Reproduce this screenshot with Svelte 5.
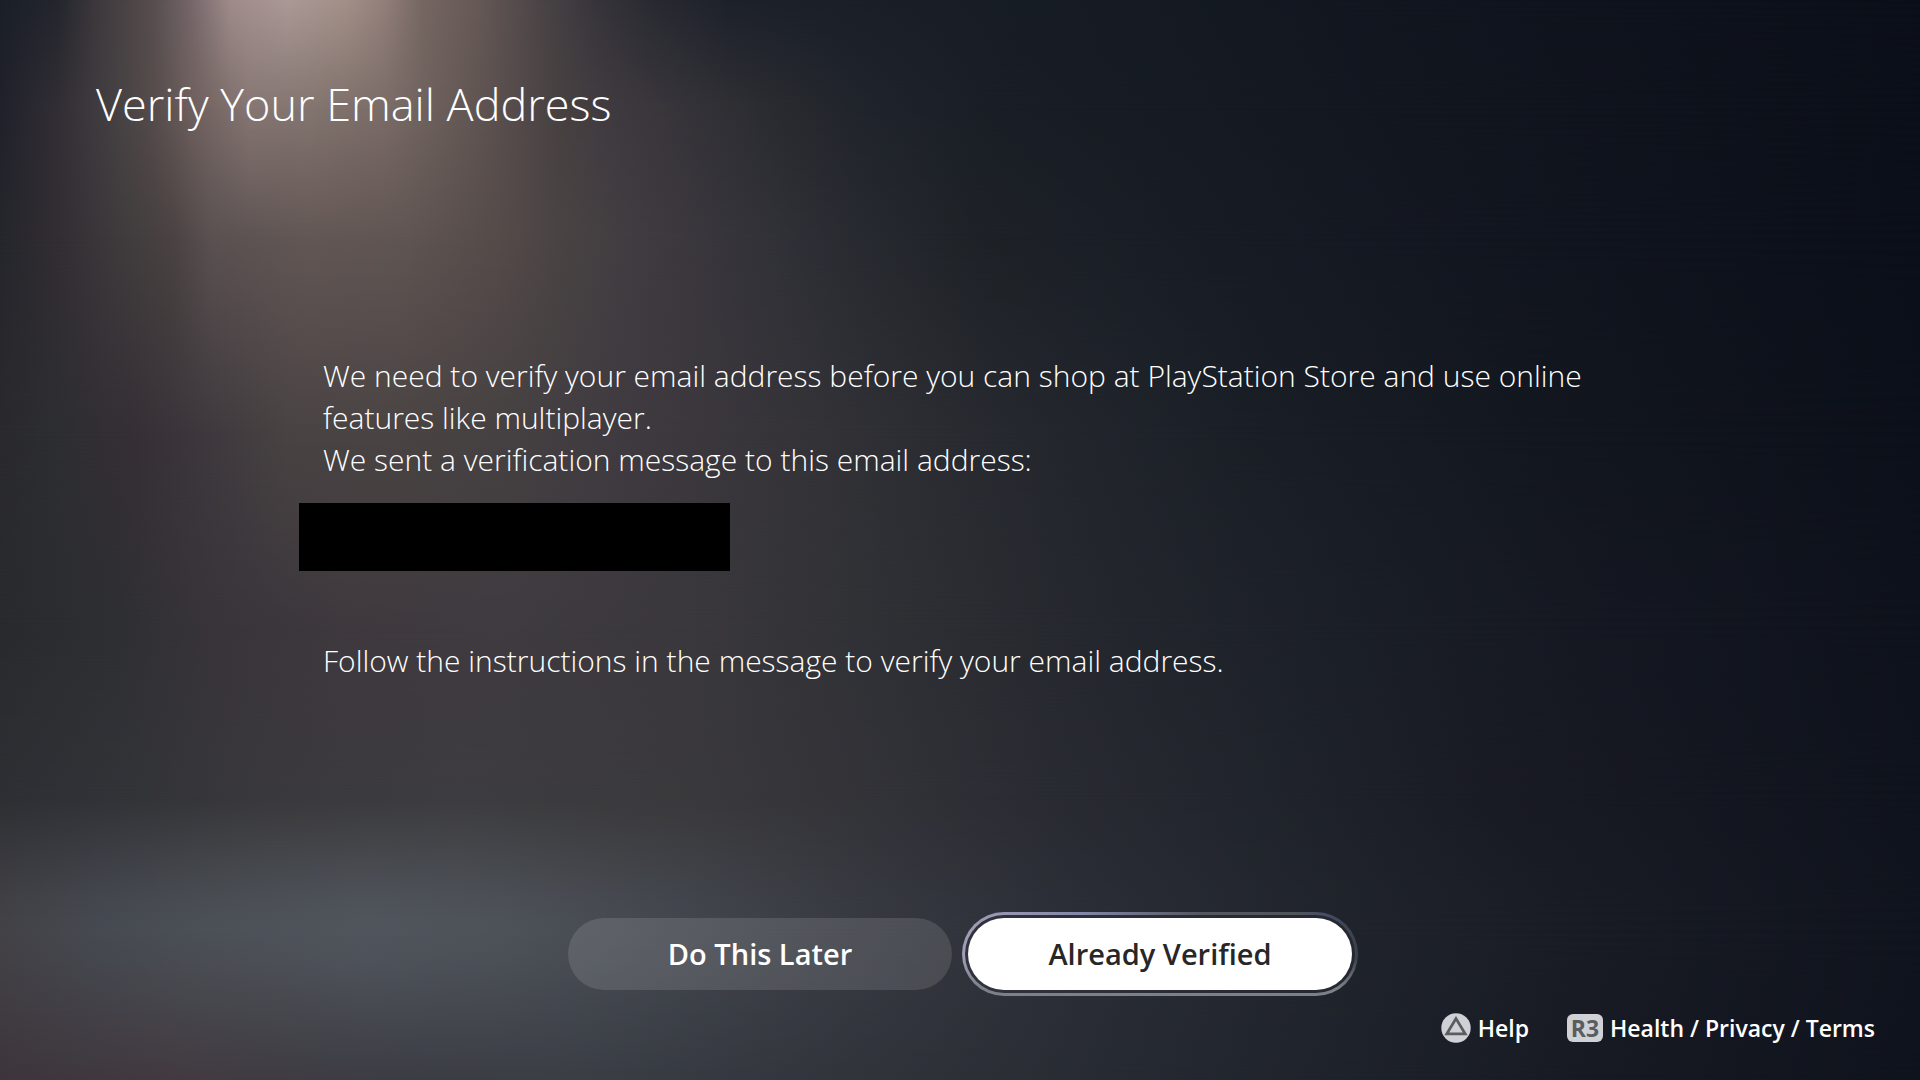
<script>
  // Horizontal colour runs of the backdrop, top to bottom; each band fades into the next.
  const bands = [
    'linear-gradient(90deg, #1a1f28 0%, #23262d 3%, #3d383c 5%, #574e4e 8%, #76676a 10%, #9f8c8a 12%, #ab9996 15%, #a39089 18%, #937f7b 20%, #756761 22%, #655856 25%, #4c4547 28%, #37353b 31%, #292a31 34%, #1d212a 38%, #1a1f28 44%, #171c24 55%, #11151f 75%, #0b0f19 100%)',
    'linear-gradient(90deg, #20212a 0%, #322e35 3%, #454143 6%, #564c4b 8%, #6e605e 10%, #867673 13%, #83756f 16%, #7b6c67 20%, #6a5e5a 23%, #5a4f4e 26%, #484141 29%, #3f3a40 32%, #323137 37%, #282a2f 41%, #20242b 45%, #191e25 52%, #12161f 75%, #0b0f19 100%)',
    'linear-gradient(90deg, #25262c 0%, #322d33 3%, #3e3a3c 6%, #4a4342 9%, #5a5151 11%, #635755 16%, #605553 21%, #554b49 26%, #4a4444 29%, #3f3a40 34%, #34333a 39%, #272a30 45%, #1e2227 51%, #181c25 62%, #11151f 80%, #0b0f19 100%)',
    'linear-gradient(90deg, #29292e 0%, #2d2e32 3%, #362f35 7%, #3f393e 11%, #494343 15%, #4a4443 20%, #464142 26%, #3f3a40 33%, #343338 42%, #26292f 52%, #1a1f26 65%, #13171f 80%, #0c101a 100%)',
    'linear-gradient(90deg, #292a2e 0%, #2e2f33 6%, #38343a 11%, #3f393e 18%, #3f3b40 26%, #3a383c 36%, #303136 45%, #25282e 56%, #1b1f27 70%, #151822 83%, #0e121c 100%)',
    'linear-gradient(90deg, #2e2f34 0%, #323338 6%, #3a393c 14%, #3d3c40 24%, #3a393c 36%, #323238 46%, #292b32 55%, #20242b 66%, #191b24 78%, #0f131d 100%)',
    'linear-gradient(90deg, #434247 0%, #464a51 5%, #4c5157 11%, #51565d 19%, #4e5359 26%, #454950 34%, #373a41 45%, #2b2e36 56%, #20242b 70%, #191c25 82%, #10141e 100%)',
    'linear-gradient(90deg, #3d353c 0%, #423a41 9%, #3c3d44 20%, #3a3e45 30%, #34373e 40%, #2d3037 50%, #252930 60%, #1d2129 72%, #161922 85%, #0f131d 100%)'
  ];
</script>

<div class="screen">
  <div class="backdrop" aria-hidden="true">
    {#each bands as band, i}
      <div class="band band-{i}" style:background={band}></div>
    {/each}
  </div>

  <header><h1>Verify Your Email Address</h1></header>

  <main>
    <p>We need to verify your email address before you can shop at PlayStation Store and use online features like multiplayer.</p>
    <p>We sent a verification message to this email address:</p>
    <div class="redacted"></div>
    <p>Follow the instructions in the message to verify your email address.</p>
  </main>

  <div class="actions">
    <button type="button">Do This Later</button>
    <div class="ring"><button type="button" class="focused">Already Verified</button></div>
  </div>

  <footer>
    <button type="button" class="hint">
      <svg width="30" height="30" viewBox="0 0 30 30" aria-hidden="true">
        <circle cx="15" cy="15" r="14.7" fill="#cfd1d6" />
        <path d="M15 5.6 24.2 20.8H5.8Z" fill="none" stroke="#5a5d5e" stroke-width="2.8" />
      </svg>
      Help
    </button>
    <button type="button" class="hint">
      <span class="key">R3</span>
      Health / Privacy / Terms
    </button>
  </footer>
</div>

<style>
  :global(body) {
    margin: 0;
    background: #10141e;
  }
  .screen {
    box-sizing: border-box;
    display: grid;
    grid-template-rows: auto 1fr auto auto;
    min-height: 100vh;
    color: #fff;
    font-family: 'Open Sans', 'Noto Sans', sans-serif;
  }
  .backdrop {
    grid-area: 1 / 1 / -1 / -1;
    display: grid;
  }
  .band { grid-area: 1 / 1; }
  .band-1 { mask-image: linear-gradient(transparent 0%, #000 10%); }
  .band-2 { mask-image: linear-gradient(transparent 10%, #000 22%); }
  .band-3 { mask-image: linear-gradient(transparent 22%, #000 40%); }
  .band-4 { mask-image: linear-gradient(transparent 40%, #000 58%); }
  .band-5 { mask-image: linear-gradient(transparent 58%, #000 74%); }
  .band-6 { mask-image: linear-gradient(transparent 74%, rgb(0 0 0 / 85%) 83%, #000 86%); }
  .band-7 { mask-image: linear-gradient(transparent 86%, rgb(0 0 0 / 15%) 89%, #000 100%); }
  header {
    grid-area: 1 / 1;
    padding: 71px 96px 0;
    z-index: 1;
  }
  h1 {
    margin: 0;
    font-size: 45px;
    line-height: 66px;
    font-weight: 300;
  }
  main {
    grid-area: 2 / 1;
    z-index: 1;
    padding: 218px 323px 0;
  }
  p {
    margin: 0;
    font-size: 30px;
    line-height: 42px;
    font-weight: 300;
  }
  .redacted {
    width: 431px;
    height: 68px;
    margin: 22px 0 69px -24px;
    background: #000;
  }
  .actions {
    grid-area: 3 / 1;
    z-index: 1;
    display: flex;
    justify-content: center;
    align-items: center;
    gap: 10px;
    padding-left: 6px;
  }
  button {
    border: 0;
    padding: 0;
    font: inherit;
    color: inherit;
    cursor: pointer;
  }
  .actions button {
    width: 384px;
    height: 72px;
    padding-bottom: 2px;
    border-radius: 36px;
    background: rgb(255 255 255 / 12%);
    font-size: 29px;
    font-weight: 600;
  }
  .ring {
    padding: 3px;
    border: 3px solid transparent;
    border-radius: 42px;
    background:
      linear-gradient(90deg, #30323d, #252830) padding-box,
      linear-gradient(to bottom, transparent 55%, #7b8186 92%) border-box,
      linear-gradient(90deg, #a29db6 0%, #8487a8 30%, #55585f 60%, #50555a 85%, #474a66 92%, #3c424b 100%) border-box;
  }
  .actions .focused {
    display: block;
    background: #fff;
    color: #272727;
  }
  footer {
    grid-area: 4 / 1;
    z-index: 1;
    display: flex;
    justify-content: flex-end;
    gap: 38px;
    padding: 16px 45px 36px;
  }
  .hint {
    display: flex;
    align-items: center;
    gap: 7px;
    background: none;
    font-size: 23px;
    line-height: 32px;
    font-weight: 600;
  }
  .key {
    width: 36px;
    height: 28px;
    border-radius: 6px;
    background: #cfd1d6;
    color: #5a5d5e;
    font-size: 23px;
    line-height: 28px;
    font-weight: 700;
    text-align: center;
  }
</style>
